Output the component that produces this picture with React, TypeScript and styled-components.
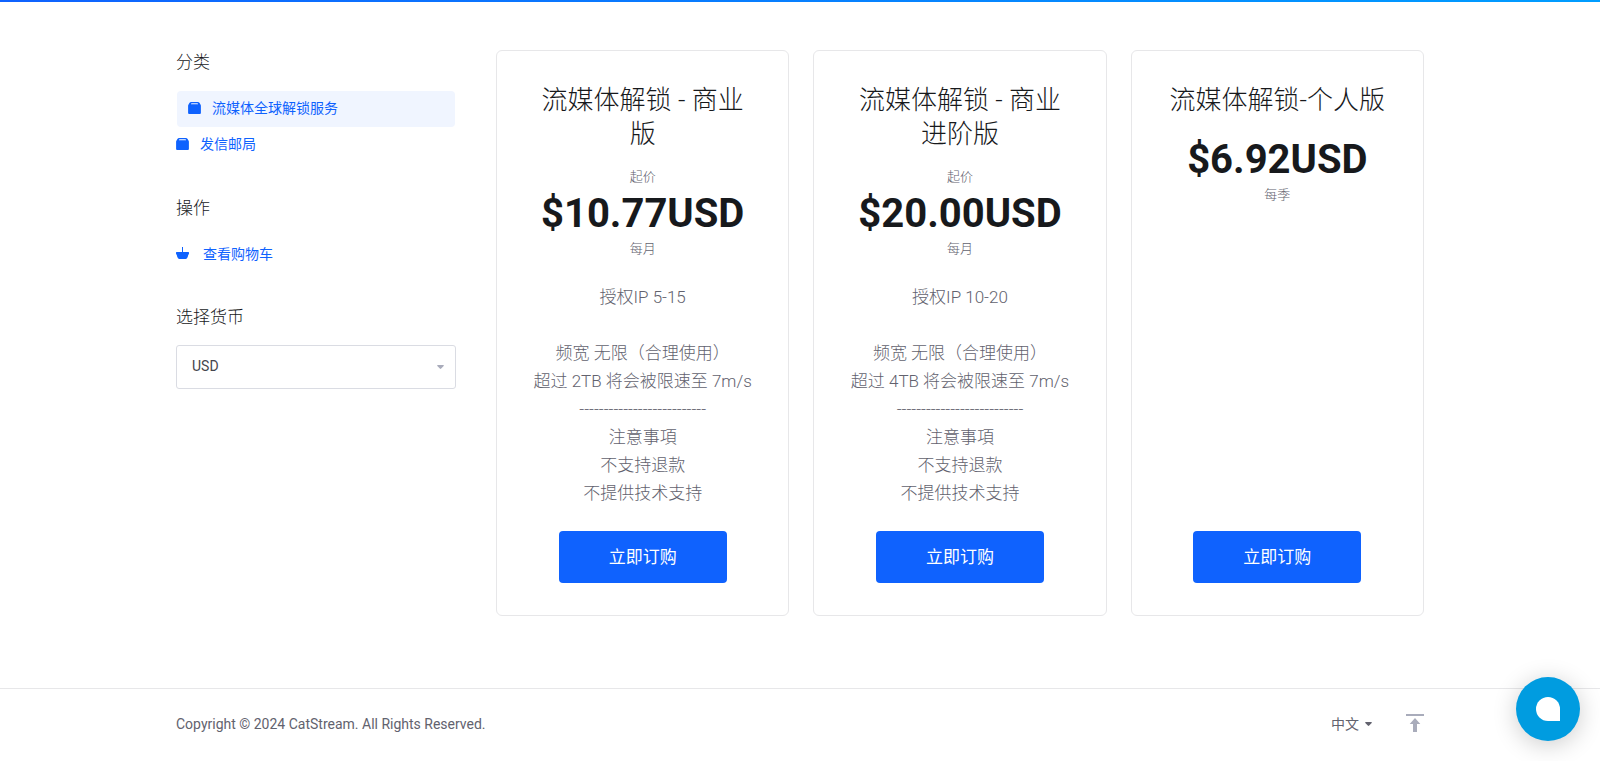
import React from "react";
import styled, { createGlobalStyle } from "styled-components";

const colors = {
  primary: "#0f62fe",
  heading: "#17191c",
  body: "#62626e",
  muted: "#62626e",
  border: "#e7e7e9",
  fieldBorder: "#dadce3",
  icon: "#a9acbb",
  activeBg: "#f0f5ff",
};

const GlobalStyle = createGlobalStyle`
  *, *::before, *::after { box-sizing: border-box; }
  body {
    margin: 0;
    background: #fff;
    color: ${colors.body};
    font-family: Roboto, "Noto Sans CJK SC", sans-serif;
    font-size: 14px;
    line-height: 20px;
  }
  button, select { font: inherit; color: inherit; }
  h1, h2, h3, p, ul { margin: 0; padding: 0; }
  ul { list-style: none; }
`;

const Page = styled.div`
  min-height: 100vh;
  display: flex;
  flex-direction: column;
`;

const TopBar = styled.div`
  height: 2px;
  background: linear-gradient(90deg, #0f62fe, #009dff);
`;

const Container = styled.div`
  width: 100%;
  max-width: 1280px;
  margin: 0 auto;
  padding: 0 16px;
`;

const Main = styled(Container).attrs({ as: "main" })`
  flex: 1;
  display: grid;
  grid-template-columns: 280px minmax(0, 1fr);
  align-items: start;
  gap: 40px;
  padding-top: 48px;
  padding-bottom: 72px;

  @media (max-width: 900px) {
    grid-template-columns: minmax(0, 1fr);
  }
`;

const Sidebar = styled.aside`
  display: flex;
  flex-direction: column;
  gap: 32px;
`;

const Section = styled.section`
  display: flex;
  flex-direction: column;
  gap: 15px;
`;

const SectionTitle = styled.h2`
  color: ${colors.heading};
  font-size: 17px;
  line-height: 25px;
  font-weight: 300;
`;

const NavList = styled.ul`
  padding: 1px 0;
`;

const NavLink = styled.a<{ $active?: boolean; $wide?: boolean }>`
  display: flex;
  align-items: center;
  gap: ${(p) => (p.$wide ? 14 : 11)}px;
  height: ${(p) => (p.$wide ? 35 : 36)}px;
  margin: 0 ${(p) => (p.$active ? 1 : 0)}px;
  padding: 0 ${(p) => (p.$active ? 11 : 0)}px 2px;
  border-radius: 4px;
  background: ${(p) => (p.$active ? colors.activeBg : "transparent")};
  color: ${colors.primary};
  text-decoration: none;
`;

const SelectLabel = styled.label`
  color: ${colors.heading};
  font-size: 17px;
  line-height: 25px;
  font-weight: 300;
`;

const SelectBox = styled.div`
  position: relative;
  svg {
    position: absolute;
    right: 12px;
    top: 20px;
    pointer-events: none;
  }
`;

const Select = styled.select`
  appearance: none;
  display: block;
  width: 100%;
  height: 44px;
  padding: 0 32px 2px 15px;
  border: 1px solid ${colors.fieldBorder};
  border-radius: 3px;
  background: #fff;
  color: #45454d;
`;

const Plans = styled.div`
  display: grid;
  grid-template-columns: repeat(auto-fit, minmax(260px, 1fr));
  gap: 24px;
`;

const Card = styled.article`
  display: flex;
  flex-direction: column;
  align-items: center;
  min-height: 566px;
  padding: 32px;
  border: 1px solid ${colors.border};
  border-radius: 6px;
  text-align: center;
`;

const PlanName = styled.h3`
  margin-bottom: 16px;
  color: ${colors.heading};
  font-size: 26px;
  line-height: 34px;
  font-weight: 300;
`;

const PriceNote = styled.span`
  color: ${colors.muted};
  font-size: 13px;
  line-height: 20px;
  font-weight: 300;
`;

const Price = styled.strong`
  padding-top: 1px;
  color: ${colors.heading};
  font-size: 40px;
  line-height: 51px;
  font-weight: 700;
`;

const Description = styled.p`
  margin: 24px -8px;
  font-size: 17px;
  line-height: 28px;
  font-weight: 300;
  white-space: pre-line;
`;

const OrderButton = styled.button`
  width: 168px;
  height: 52px;
  margin-top: auto;
  border: 0;
  border-radius: 4px;
  background: ${colors.primary};
  color: #fff;
  font-size: 17px;
  font-weight: 400;
  cursor: pointer;
`;

const Footer = styled.footer`
  border-top: 1px solid ${colors.border};
`;

const FooterRow = styled(Container)`
  display: flex;
  align-items: center;
  justify-content: space-between;
  min-height: 72px;
  padding-bottom: 3px;
`;

const FooterTools = styled.div`
  display: flex;
  align-items: center;
  gap: 34px;
`;

const PlainButton = styled.button`
  display: flex;
  align-items: center;
  gap: 6px;
  padding: 0;
  border: 0;
  background: none;
  cursor: pointer;
`;

const TopLink = styled.a`
  display: flex;
`;

const ChatButton = styled.button`
  position: fixed;
  right: 20px;
  bottom: 20px;
  display: flex;
  align-items: center;
  justify-content: center;
  width: 64px;
  height: 64px;
  padding: 0;
  border: 0;
  border-radius: 50%;
  background: #009ce0;
  box-shadow: 0 4px 24px rgba(0, 0, 0, 0.2);
  cursor: pointer;
`;

const BoxIcon = () => (
  <svg width="13" height="13" viewBox="0 0 13 13" aria-hidden="true">
    <path
      fill={colors.primary}
      fillRule="evenodd"
      d="M3.2 0H9.8Q11 0 11.6 1L12.6 2.8Q12.9 3.2 12.9 3.8V11Q12.9 12 11.9 12H1.1Q0.1 12 0.1 11V3.8Q0.1 3.2 0.4 2.8L1.4 1Q2 0 3.2 0ZM3.4 1.3L2.9 2.3H10.1L9.6 1.3Z"
    />
  </svg>
);

const CartIcon = () => (
  <svg width="13" height="13" viewBox="0 0 13 13" aria-hidden="true">
    <path
      fill={colors.primary}
      d="M6 0H7V5H12.4Q13 5 13 5.6V6.6Q13 7.4 12.3 7.7Q11.9 9.8 11 11.2Q10.5 12 9.6 12H3.4Q2.5 12 2 11.2Q1.1 9.8 0.7 7.7Q0 7.4 0 6.6V5.6Q0 5 0.6 5H6Z"
    />
  </svg>
);

const Caret = ({ color }: { color: string }) => (
  <svg width="7" height="4" viewBox="0 0 7 4" aria-hidden="true">
    <path fill={color} d="M0.6 0H6.4Q7 0.2 6.7 0.9L4.2 3.6Q3.5 4.2 2.8 3.6L0.3 0.9Q0 0.2 0.6 0Z" />
  </svg>
);

const TopIcon = () => (
  <svg width="18" height="20" viewBox="0 0 18 20" aria-hidden="true">
    <path fill={colors.icon} d="M0 0H18V2H0ZM9 4L14.3 10H11V18H7V10H3.7Z" />
  </svg>
);

interface Plan {
  name: string;
  from?: boolean;
  price: string;
  cycle: string;
  description?: string;
}

const describe = (ips: string, quota: string) =>
  [
    `授权IP ${ips}`,
    "",
    "频宽 无限（合理使用）",
    `超过 ${quota} 将会被限速至 7m/s`,
    "--------------------------",
    "注意事項",
    "不支持退款",
    "不提供技术支持",
  ].join("\n");

const plans: Plan[] = [
  {
    name: "流媒体解锁 - 商业版",
    from: true,
    price: "$10.77USD",
    cycle: "每月",
    description: describe("5-15", "2TB"),
  },
  {
    name: "流媒体解锁 - 商业进阶版",
    from: true,
    price: "$20.00USD",
    cycle: "每月",
    description: describe("10-20", "4TB"),
  },
  { name: "流媒体解锁-个人版", price: "$6.92USD", cycle: "每季" },
];

export default function App() {
  return (
    <Page id="top">
      <GlobalStyle />
      <TopBar />
      <Main>
        <Sidebar>
          <Section>
            <SectionTitle>分类</SectionTitle>
            <NavList>
              <li>
                <NavLink href="#streaming" $active aria-current="page">
                  <BoxIcon />
                  流媒体全球解锁服务
                </NavLink>
              </li>
              <li>
                <NavLink href="#mail">
                  <BoxIcon />
                  发信邮局
                </NavLink>
              </li>
            </NavList>
          </Section>
          <Section>
            <SectionTitle>操作</SectionTitle>
            <NavList>
              <li>
                <NavLink href="#cart" $wide>
                  <CartIcon />
                  查看购物车
                </NavLink>
              </li>
            </NavList>
          </Section>
          <Section>
            <SelectLabel htmlFor="currency">选择货币</SelectLabel>
            <SelectBox>
              <Select id="currency" defaultValue="USD">
                <option value="USD">USD</option>
              </Select>
              <Caret color={colors.icon} />
            </SelectBox>
          </Section>
        </Sidebar>
        <Plans>
          {plans.map((plan) => (
            <Card key={plan.name}>
              <PlanName>{plan.name}</PlanName>
              {plan.from && <PriceNote>起价</PriceNote>}
              <Price>{plan.price}</Price>
              <PriceNote>{plan.cycle}</PriceNote>
              {plan.description && <Description>{plan.description}</Description>}
              <OrderButton type="button">立即订购</OrderButton>
            </Card>
          ))}
        </Plans>
      </Main>
      <Footer>
        <FooterRow>
          <p>Copyright © 2024 CatStream. All Rights Reserved.</p>
          <FooterTools>
            <PlainButton type="button">
              中文
              <Caret color={colors.body} />
            </PlainButton>
            <TopLink href="#top" aria-label="返回顶部">
              <TopIcon />
            </TopLink>
          </FooterTools>
        </FooterRow>
      </Footer>
      <ChatButton type="button" aria-label="在线客服">
        <svg width="24" height="24" viewBox="0 0 24 24" aria-hidden="true">
          <path fill="#fff" d="M12 0A12 12 0 0 1 24 12V24H12A12 12 0 0 1 12 0Z" />
        </svg>
      </ChatButton>
    </Page>
  );
}
